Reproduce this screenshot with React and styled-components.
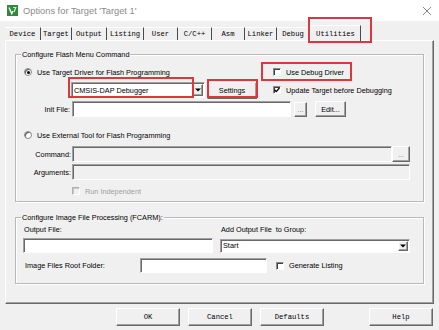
import React from 'react';
import styled, { createGlobalStyle, css } from 'styled-components';

const Global = createGlobalStyle`
  html, body { margin: 0; padding: 0; background: #f0f0f0; }
  body { font-family: "Liberation Sans", Arial, sans-serif; }
  * { box-sizing: border-box; }
`;

const sans = css`
  font-family: "Liberation Sans", Arial, sans-serif;
  font-size: 7.3px;
  color: #000;
`;

const mono = css`
  font-family: "Liberation Mono", "Courier New", monospace;
  font-size: 7.2px;
  font-weight: normal;
  color: #000;
`;

const raised = css`
  background: #f0f0f0;
  border: 1px solid;
  border-color: #fff #696969 #696969 #fff;
  box-shadow: inset -1px -1px 0 #a0a0a0;
`;

const sunken = css`
  border: 1px solid;
  border-color: #a0a0a0 #fff #fff #a0a0a0;
  box-shadow: inset 1px 1px 0 #696969;
`;

const Window = styled.div`
  width: 439px;
  height: 330px;
  background: #f0f0f0;
  display: flex;
  flex-direction: column;
  overflow: hidden;
`;

const TitleBar = styled.div`
  height: 21px;
  background: #fff;
  display: flex;
  align-items: center;
  padding: 0 7px 0 7px;
`;

const TitleText = styled.span`
  margin-left: 5px;
  font-family: "Liberation Sans", Arial, sans-serif;
  font-size: 9.3px;
  color: #8a8a8a;
`;

const CloseBox = styled.div`
  margin-left: auto;
  display: flex;
`;

const TabStrip = styled.div`
  height: 19px;
  display: flex;
  align-items: flex-end;
  padding-left: 5px;
  position: relative;
  z-index: 2;
`;

const Tab = styled.div`
  ${mono}
  position: relative;
  width: ${p => p.$w}px;
  height: ${p => (p.$active ? 16 : 13)}px;
  margin-bottom: ${p => (p.$active ? -1 : 0)}px;
  display: flex;
  align-items: center;
  justify-content: center;
  white-space: pre;
  background: #f0f0f0;
  border-top: 1px solid #fff;
  border-right: 1px solid #4a4a4a;
  border-left: ${p => (p.$active ? '1px solid #fff' : 'none')};
`;

const RedBox = styled.div`
  position: absolute;
  left: ${p => p.$l}px;
  top: ${p => p.$t}px;
  width: ${p => p.$w}px;
  height: ${p => p.$h}px;
  border: 2px solid #e0363b;
  pointer-events: none;
`;

const Panel = styled.div`
  margin: 0 5px;
  height: 264px;
  border: 1px solid;
  border-color: #fff #696969 #696969 #fff;
  box-shadow: inset -1px -1px 0 #a0a0a0;
  padding: 13px 0 0 9px;
  position: relative;
  z-index: 1;
`;

const Group = styled.div`
  position: relative;
  width: 409px;
  height: ${p => p.$h}px;
  margin-bottom: ${p => p.$mb || 0}px;
  border: 1px solid #b9b9b9;
  box-shadow: inset 1px 1px 0 #fff, 1px 1px 0 #fff;
  display: flex;
  flex-direction: column;
`;

const Legend = styled.span`
  ${sans}
  position: absolute;
  left: 5px;
  top: -6px;
  padding: 0 1px;
  line-height: 11px;
  background: #f0f0f0;
`;

const Row = styled.div`
  display: flex;
  align-items: center;
  height: ${p => p.$h || 16}px;
  margin-top: ${p => p.$mt || 0}px;
  padding-left: ${p => p.$pl || 0}px;
`;

const Cell = styled.div`
  display: flex;
  align-items: center;
  width: ${p => p.$w}px;
  flex: none;
`;

const Item = styled.div`
  ${sans}
  position: relative;
  display: flex;
  align-items: center;
  margin-left: ${p => p.$ml || 0}px;
  color: ${p => (p.$disabled ? '#a0a0a0' : '#000')};
  white-space: nowrap;
`;

const RadioDot = styled.span`
  width: 8px;
  height: 8px;
  border-radius: 50%;
  border: 1px solid #8a8a8a;
  background: #fff;
  box-shadow: inset 1px 1px 0 #555;
  display: flex;
  align-items: center;
  justify-content: center;
  margin-right: 5px;
  &::after {
    content: '';
    width: 3px;
    height: 3px;
    border-radius: 50%;
    background: ${p => (p.$on ? '#000' : 'transparent')};
  }
`;

const CheckBox = styled.span`
  width: 8px;
  height: 8px;
  ${sunken}
  border-color: #8a8a8a #fff #fff #8a8a8a;
  box-shadow: inset 1px 1px 0 #404040;
  background: ${p => (p.$disabled ? '#f0f0f0' : '#fff')};
  display: flex;
  align-items: center;
  justify-content: center;
  margin-right: 5px;
  ${p => p.$disabled && css`
    border-color: #b0b0b0 #fff #fff #b0b0b0;
    box-shadow: inset 1px 1px 0 #c8c8c8;
  `}
`;

const FieldLabel = styled.div`
  ${sans}
  width: ${p => p.$w}px;
  padding-left: ${p => p.$pl || 0}px;
  text-align: ${p => p.$align || 'left'};
  flex: none;
  white-space: nowrap;
`;

const TextBox = styled.div`
  ${sans}
  width: ${p => p.$w}px;
  height: ${p => p.$h || 16}px;
  margin-left: ${p => p.$ml || 0}px;
  ${sunken}
  background: ${p => (p.$disabled ? '#f0f0f0' : '#fff')};
  flex: none;
`;

const Combo = styled.div`
  ${sans}
  position: relative;
  width: ${p => p.$w}px;
  height: ${p => p.$h || 16}px;
  ${sunken}
  background: #fff;
  display: flex;
  align-items: center;
  padding-left: 2px;
  flex: none;
`;

const ComboText = styled.span`
  flex: 1;
  white-space: nowrap;
`;

const ArrowBtn = styled.span`
  width: 10px;
  align-self: stretch;
  margin: 1px 1px 1px 0;
  ${raised}
  display: flex;
  align-items: center;
  justify-content: center;
`;

const Btn = styled.div`
  ${p => (p.$mono ? mono : sans)}
  position: relative;
  width: ${p => p.$w}px;
  height: ${p => p.$h || 16}px;
  margin-left: ${p => p.$ml || 0}px;
  ${raised}
  display: flex;
  align-items: center;
  justify-content: center;
  flex: none;
  color: ${p => (p.$dim ? '#808080' : '#000')};
`;

const Grid2 = styled.div`
  display: grid;
  grid-template-columns: 190px 190px;
  column-gap: 7px;
  padding-left: 7px;
  margin-top: ${p => p.$mt || 0}px;
  align-items: center;
`;

const ButtonBar = styled.div`
  display: flex;
  align-items: center;
  height: 18px;
  margin-top: 4px;
  padding: 0 6px 0 116px;
  gap: 8px;
`;

const Spacer = styled.div`
  flex: 1;
`;

const Check = () => (
  <svg width="6" height="6" viewBox="0 0 6 6">
    <path d="M0.6 2.8 L2.3 4.6 L5.4 1" stroke="#000" strokeWidth="1.3" fill="none" />
  </svg>
);

const Arrow = () => (
  <svg width="6" height="4" viewBox="0 0 6 4">
    <path d="M0 0.5 L6 0.5 L3 3.5 Z" fill="#000" />
  </svg>
);

const tabs = [
  ['Device', 36], ['Target', 31], ['Output', 35], ['Listing', 37], ['User', 34],
  ['C/C++', 34], ['Asm', 33], ['Linker', 32], ['Debug', 33],
];

export default function App() {
  return (
    <>
      <Global />
      <Window>
        <TitleBar>
          <svg width="11" height="11" viewBox="0 0 11 11">
            <rect x="0" y="0" width="11" height="11" fill="#2f8a3c" />
            <path d="M2 2.5 L4.8 8.5 L6 6" stroke="#fff" strokeWidth="1.4" fill="none" />
            <path d="M6.2 2.5 L8.8 2.5 L7 7" stroke="#d8efd8" strokeWidth="1.2" fill="none" />
          </svg>
          <TitleText>Options for Target 'Target 1'</TitleText>
          <CloseBox>
            <svg width="10" height="10" viewBox="0 0 10 10">
              <path d="M1 1 L9 9 M9 1 L1 9" stroke="#7a7a7a" strokeWidth="0.9" />
            </svg>
          </CloseBox>
        </TitleBar>

        <TabStrip>
          {tabs.map(([t, w]) => (
            <Tab key={t} $w={w}>{t}</Tab>
          ))}
          <Tab $w={51} $active>
            Utilities
            <RedBox $l={-3} $t={-9} $w={64} $h={26} />
          </Tab>
        </TabStrip>

        <Panel>
          <Group $h={148} $mb={15}>
            <Legend>Configure Flash Menu Command</Legend>

            <Row $mt={9} $pl={8}>
              <Cell $w={249}>
                <Item><RadioDot $on />Use Target Driver for Flash Programming</Item>
              </Cell>
              <Item>
                <CheckBox />Use Debug Driver
                <RedBox $l={-12} $t={-6} $w={91} $h={19} />
              </Item>
            </Row>

            <Row $mt={2} $pl={55}>
              <Combo $w={134}>
                <ComboText>CMSIS-DAP Debugger</ComboText>
                <ArrowBtn><Arrow /></ArrowBtn>
                <RedBox $l={-4} $t={-6} $w={126} $h={21} />
              </Combo>
              <Btn $w={50} $h={17} $ml={2}>
                Settings
                <RedBox $l={-1} $t={-4} $w={51} $h={19} />
              </Btn>
              <Item $ml={16}><CheckBox><Check /></CheckBox>Update Target before Debugging</Item>
            </Row>

            <Row $mt={3}>
              <FieldLabel $w={54} $align="right">Init File:</FieldLabel>
              <TextBox $w={219} $ml={2} />
              <Btn $w={13} $h={15} $ml={3} $dim>...</Btn>
              <Btn $w={31} $ml={8}>Edit...</Btn>
            </Row>

            <Row $mt={10} $pl={8}>
              <Item><RadioDot />Use External Tool for Flash Programming</Item>
            </Row>

            <Row $mt={3}>
              <FieldLabel $w={55} $align="right">Command:</FieldLabel>
              <TextBox $w={320} $ml={1} $disabled />
              <Btn $w={18} $dim>...</Btn>
            </Row>

            <Row $mt={2}>
              <FieldLabel $w={55} $align="right">Arguments:</FieldLabel>
              <TextBox $w={338} $ml={1} $disabled />
            </Row>

            <Row $mt={3} $pl={56}>
              <Item $disabled><CheckBox $disabled />Run Independent</Item>
            </Row>
          </Group>

          <Group $h={67}>
            <Legend>Configure Image File Processing (FCARM):</Legend>
            <Grid2 $mt={7}>
              <FieldLabel $pl={1}>Output File:</FieldLabel>
              <FieldLabel $pl={1}>Add Output File&nbsp; to Group:</FieldLabel>
            </Grid2>
            <Grid2 $mt={4}>
              <TextBox $w={190} $h={15} />
              <Combo $w={190} $h={14}>
                <ComboText>Start</ComboText>
                <ArrowBtn><Arrow /></ArrowBtn>
              </Combo>
            </Grid2>
            <Row $mt={5} $h={15} $pl={9}>
              <FieldLabel $w={115}>Image Files Root Folder:</FieldLabel>
              <TextBox $w={127} $h={15} />
              <Item $ml={9}><CheckBox />Generate Listing</Item>
            </Row>
          </Group>
        </Panel>

        <ButtonBar>
          <Btn $mono $w={64} $h={18}>OK</Btn>
          <Btn $mono $w={64} $h={18}>Cancel</Btn>
          <Btn $mono $w={64} $h={18}>Defaults</Btn>
          <Spacer />
          <Btn $mono $w={64} $h={18}>Help</Btn>
        </ButtonBar>
      </Window>
    </>
  );
}
